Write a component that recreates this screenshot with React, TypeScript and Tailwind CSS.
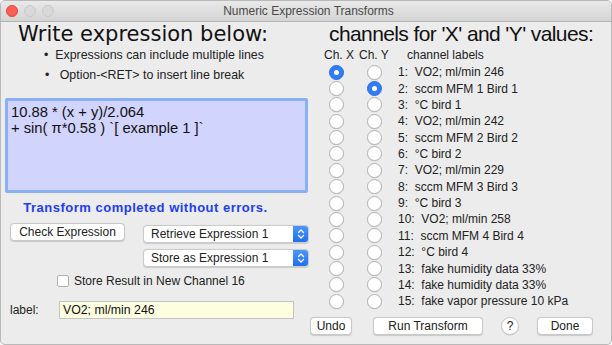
import React from 'react';

const channels = [
    '1:  VO2; ml/min 246',
    '2:  sccm MFM 1 Bird 1',
    '3:  °C bird 1',
    '4:  VO2; ml/min 242',
    '5:  sccm MFM 2 Bird 2',
    '6:  °C bird 2',
    '7:  VO2; ml/min 229',
    '8:  sccm MFM 3 Bird 3',
    '9:  °C bird 3',
    '10:  VO2; ml/min 258',
    '11:  sccm MFM 4 Bird 4',
    '12:  °C bird 4',
    '13:  fake humidity data 33%',
    '14:  fake humidity data 33%',
    '15:  fake vapor pressure 10 kPa',
];

const Radio: React.FC<{ on?: boolean }> = ({ on }) =>
    on ? (
        <div className="w-[15px] h-[15px] rounded-full bg-[#2f7cf6] border border-[#2a6fe0] flex items-center justify-center">
            <div className="w-[5px] h-[5px] rounded-full bg-white" />
        </div>
    ) : (
        <div className="w-[15px] h-[15px] rounded-full bg-white border border-[#b2b2b2] shadow-[0_0.5px_0.5px_rgba(0,0,0,0.08)]" />
    );

const Popup: React.FC<{ label: string }> = ({ label }) => (
    <div className="w-[166px] h-[18px] flex rounded-[4px] bg-white border border-[#cacaca] shadow-[0_0.5px_1px_rgba(0,0,0,0.15)] overflow-hidden">
        <div className="flex-1 pl-[7px] text-[12px] leading-[17px] text-[#222]">{label}</div>
        <div className="w-[15px] h-full bg-gradient-to-b from-[#4c95fa] to-[#1e6ff0] flex items-center justify-center">
            <svg width="8" height="12" viewBox="0 0 8 12" fill="none" stroke="white" strokeWidth="1.4" strokeLinecap="round" strokeLinejoin="round">
                <path d="M1.5 4.5 L4 2 L6.5 4.5" />
                <path d="M1.5 7.5 L4 10 L6.5 7.5" />
            </svg>
        </div>
    </div>
);

const Btn: React.FC<{ label: string; className?: string }> = ({ label, className = '' }) => (
    <div className={`h-[18px] flex items-center justify-center rounded-[4px] bg-white border border-[#c8c8c8] shadow-[0_0.5px_1px_rgba(0,0,0,0.15)] text-[12px] text-[#222] ${className}`}>
        {label}
    </div>
);

export default function App() {
    return (
        <div className="w-[612px] h-[345px] bg-[#f4f4f4] font-['Liberation_Sans',Arial,sans-serif]">
            <div className="w-full h-full flex flex-col bg-[#ececec] border border-[#b9b9b9] rounded-[5px] overflow-hidden">
                {/* Title bar */}
                <div className="h-[21px] shrink-0 flex items-center relative bg-gradient-to-b from-[#e9e9e9] to-[#d4d4d4] border-b border-[#b3b3b3]">
                    <div className="flex gap-[6px] pl-[5px]">
                        <div className="w-[12px] h-[12px] rounded-full bg-[#fc5f57] border border-[#e0443e]" />
                        <div className="w-[12px] h-[12px] rounded-full bg-[#d9d9d9] border border-[#c8c8c8]" />
                        <div className="w-[12px] h-[12px] rounded-full bg-[#d9d9d9] border border-[#c8c8c8]" />
                    </div>
                    <div className="flex-1 text-center text-[12px] text-[#4a4a4a] -ml-[48px]">Numeric Expression Transforms</div>
                </div>

                {/* Headings */}
                <div className="flex h-[24px] leading-[24px] text-[#111]">
                    <div className="w-[328px] pl-[17px] text-[21px] font-['DejaVu_Sans',sans-serif]">Write expression below:</div>
                    <div className="text-[21px] tracking-[-0.6px]">channels for 'X' and 'Y' values:</div>
                </div>

                <div className="flex flex-1">
                    {/* Left column */}
                    <div className="w-[309px] flex flex-col">
                        <ul className="pl-[44px] text-[12.4px] leading-[19.5px] text-[#222]">
                            <li className="-ml-[1px]">•&nbsp; Expressions can include multiple lines</li>
                            <li>•&nbsp;&nbsp; Option-&lt;RET&gt; to insert line break</li>
                        </ul>
                        <div className="ml-[4px] mt-[13px] w-[303px] h-[95px] bg-[#d1d4fc] border-[3px] border-[#88b0f2] rounded-[2px] px-[3px] pt-[3px] text-[14.75px] leading-[16px] text-[#111]">
                            <div>10.88 * (x + y)/2.064</div>
                            <div className="whitespace-pre">+ sin( π*0.58 ) `[ example 1 ]`</div>
                        </div>
                        <div className="mt-[7px] text-center text-[13px] leading-[16px] font-bold text-[#1c3df2] tracking-[0.5px] pr-[20px]">
                            Transform completed without errors.
                        </div>
                        <div className="mt-[7px] flex items-start">
                            <Btn label="Check Expression" className="ml-[9px] w-[115px]" />
                            <div className="ml-[18px] mt-[2px] flex flex-col gap-[6px]">
                                <Popup label="Retrieve Expression 1" />
                                <Popup label="Store as Expression 1" />
                            </div>
                        </div>
                        <div className="mt-[7px] h-[14px] ml-[56px] flex items-center gap-[5px]">
                            <div className="w-[12px] h-[12px] rounded-[2px] bg-white border border-[#b0b0b0]" />
                            <span className="text-[12px] text-[#222]">Store Result in New Channel 16</span>
                        </div>
                        <div className="mt-[13px] flex items-center">
                            <span className="ml-[9px] w-[49px] text-[12px] text-[#222]">label:</span>
                            <div className="w-[235px] h-[18px] bg-[#fdfde0] border border-[#c4c4c4] pl-[3px] text-[12.3px] leading-[16px] text-[#111]">
                                VO2; ml/min 246
                            </div>
                        </div>
                    </div>

                    {/* Right column */}
                    <div className="flex-1 flex flex-col">
                        <div className="flex text-[12px] leading-[16px] text-[#222] pt-[1px]">
                            <span className="ml-[14px] w-[35px]">Ch. X</span>
                            <span className="w-[48px]">Ch. Y</span>
                            <span>channel labels</span>
                        </div>
                        <div className="mt-[1px] flex flex-col">
                            {channels.map((c, i) => (
                                <div key={i} className="h-[16.36px] flex items-center">
                                    <div className="ml-[19px]"><Radio on={i === 0} /></div>
                                    <div className="ml-[23px]"><Radio on={i === 1} /></div>
                                    <span className="ml-[16px] whitespace-pre text-[12px] text-[#222]">{c}</span>
                                </div>
                            ))}
                        </div>
                        <div className="mt-[8px] flex items-center">
                            <Btn label="Undo" className="w-[42px]" />
                            <Btn label="Run Transform" className="ml-[21px] w-[110px]" />
                            <div className="ml-[18px] w-[18px] h-[18px] rounded-full bg-white border border-[#c8c8c8] shadow-[0_0.5px_1px_rgba(0,0,0,0.15)] flex items-center justify-center text-[12px] text-[#222]">?</div>
                            <Btn label="Done" className="ml-[18px] w-[56px]" />
                        </div>
                    </div>
                </div>
            </div>
        </div>
    );
}
